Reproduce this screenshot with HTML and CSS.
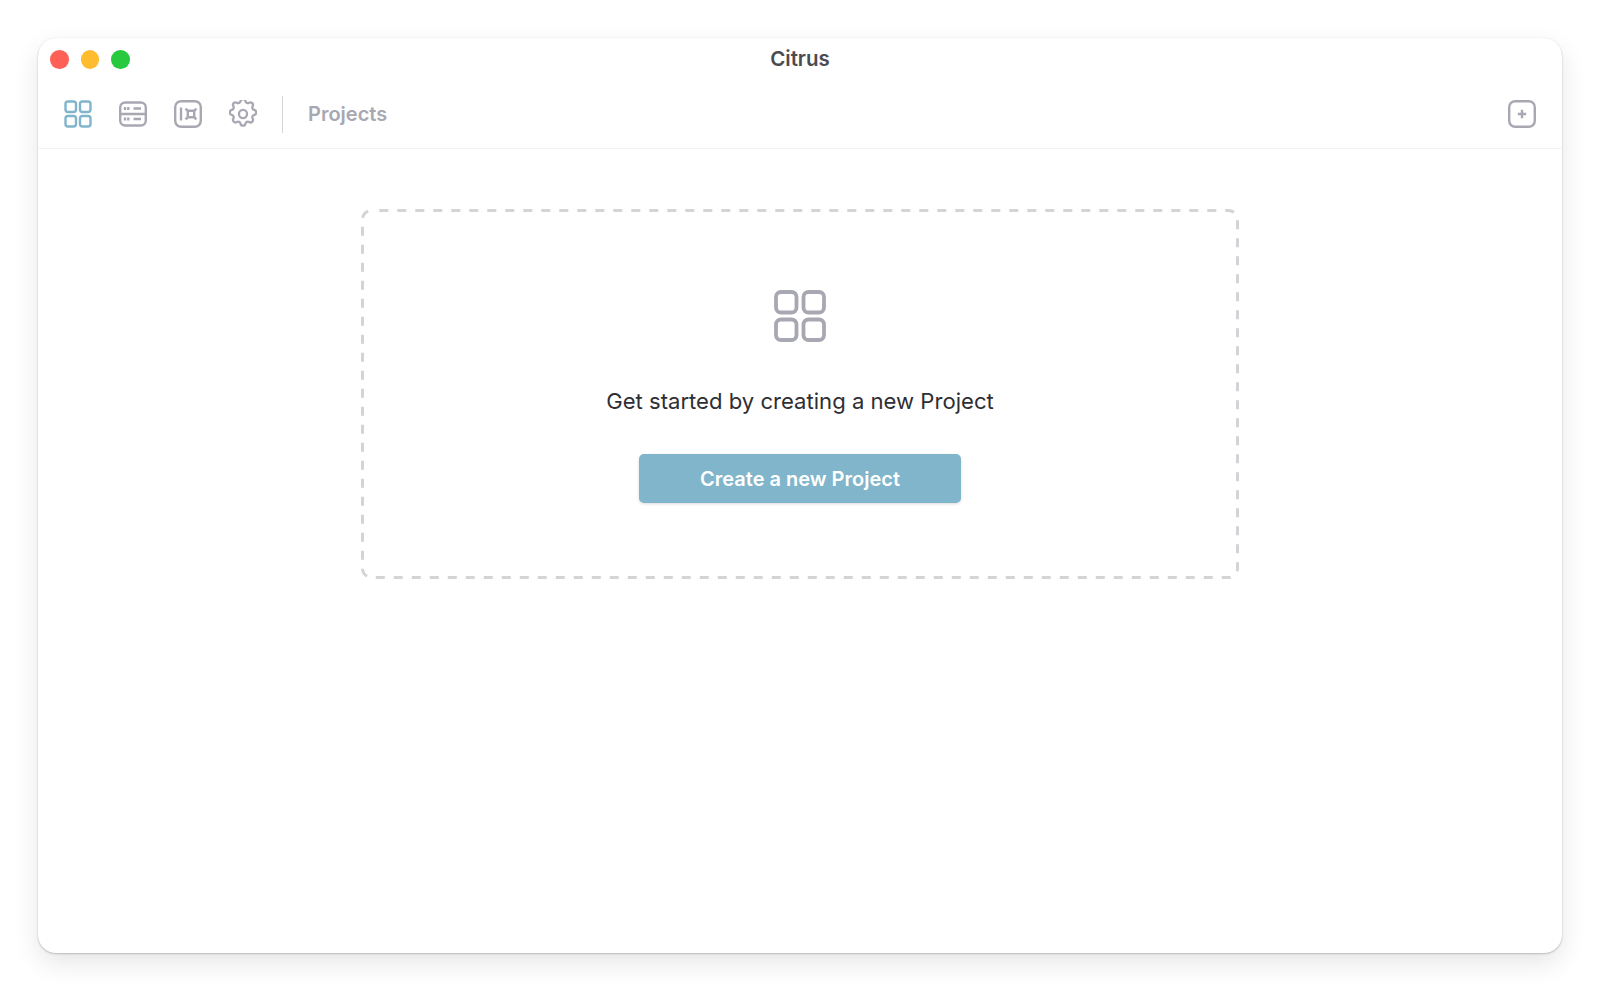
FILE: index.html
```html
<!DOCTYPE html>
<html>
<head>
  <title>Citrus</title>
  <link rel="stylesheet" href="styles.css">
</head>
<body>
  <div class="window">
    <div class="titlebar">
      <div class="lights">
        <span class="light red"></span>
        <span class="light yellow"></span>
        <span class="light green"></span>
      </div>
      <h1 class="title">Citrus</h1>
    </div>
    <div class="toolbar">
      <div class="nav">
        <a class="nav-icon active">
          <svg viewBox="0 0 28 28" width="28" height="28"><rect x="1.5" y="1.5" width="10.5" height="10.5" rx="2.5"/><rect x="16" y="1.5" width="10.5" height="10.5" rx="2.5"/><rect x="1.5" y="16" width="10.5" height="10.5" rx="2.5"/><rect x="16" y="16" width="10.5" height="10.5" rx="2.5"/></svg>
        </a>
        <a class="nav-icon">
          <svg viewBox="0 0 28 28" width="28" height="28"><rect x="1.2" y="2.5" width="25.6" height="23" rx="5"/><path d="M1.2 14h25.6M6 7v3M9.3 7v3M14.5 8.500h7.500M6 17.500v3M9.3 17.500v3M14.500 19h7.500"/></svg>
        </a>
        <a class="nav-icon">
          <svg viewBox="0 0 28 28" width="28" height="28"><rect x="1.2" y="1.2" width="25.6" height="25.6" rx="6"/><path d="M7 7.500v13"/><rect x="13.800" y="10.800" width="6.400" height="6.400" rx="1"/><path d="M11.600 8.600l2.200 2.200M22.400 8.600l-2.200 2.200M11.600 19.400l2.200-2.200M22.400 19.400l-2.200-2.200"/></svg>
        </a>
        <a class="nav-icon">
          <svg viewBox="2.300 1.800 19.400 19.400" width="28" height="28"><path class="thin" d="M10.300 2.600c.4-1.800 3-1.800 3.400 0a1.750 1.750 0 0 0 2.600 1.100c1.500-.9 3.300.8 2.400 2.400a1.750 1.750 0 0 0 1.100 2.600c1.800.4 1.800 3 0 3.400a1.750 1.750 0 0 0-1.100 2.600c.9 1.500-.8 3.300-2.400 2.400a1.750 1.750 0 0 0-2.600 1.100c-.4 1.800-3 1.800-3.400 0a1.750 1.750 0 0 0-2.600-1.100c-1.500.9-3.300-.8-2.400-2.400a1.750 1.750 0 0 0-1.100-2.600c-1.800-.4-1.800-3 0-3.400a1.750 1.750 0 0 0 1.100-2.600c-.9-1.500.8-3.300 2.400-2.400a1.750 1.750 0 0 0 2.600-1.100z"/><circle class="thin" cx="12" cy="11.500" r="2.800"/></svg>
        </a>
      </div>
      <span class="divider"></span>
      <span class="page-name">Projects</span>
      <a class="add-btn">
        <svg viewBox="0 0 28 28" width="28" height="28"><rect x="1.2" y="1.2" width="25.600" height="25.600" rx="6"/><path d="M14 9.800v8.400M9.800 14h8.400"/></svg>
      </a>
    </div>
    <div class="content">
      <div class="empty">
        <svg class="dashes" width="878" height="370"><rect x="1.500" y="1.500" width="875" height="367" rx="9"/></svg>
        <svg class="empty-icon" viewBox="0 0 52 52" width="52" height="52"><rect x="2" y="2" width="20.500" height="20.500" rx="5"/><rect x="29.500" y="2" width="20.500" height="20.500" rx="5"/><rect x="2" y="29.500" width="20.500" height="20.500" rx="5"/><rect x="29.500" y="29.500" width="20.500" height="20.500" rx="5"/></svg>
        <p class="empty-text">Get started by creating a new Project</p>
        <button class="create-btn" type="button">Create a new Project</button>
      </div>
    </div>
  </div>
</body>
</html>
```

FILE: styles.css
```css
* {
  box-sizing: border-box;
}

body {
  margin: 0;
  padding: 38px;
  height: 991px;
  overflow: hidden;
  background-color: #fff;
  font-family: Inter, "Liberation Sans", sans-serif;
}

.window {
  display: flex;
  flex-direction: column;
  height: 915px;
  background-color: #fff;
  border-radius: 18px;
  box-shadow: 0 0 1px rgba(0, 0, 0, 0.12), 0 1px 2px rgba(0, 0, 0, 0.2), 0 10px 26px rgba(0, 0, 0, 0.1);
}

.titlebar {
  position: relative;
  display: flex;
  justify-content: center;
  align-items: center;
  height: 41px;
}

.lights {
  position: absolute;
  left: 12px;
  top: 12px;
  display: flex;
  gap: 12px;
}

.light {
  width: 18.500px;
  height: 18.500px;
  border-radius: 50%;
}

.red { background-color: #fe5f57; }
.yellow { background-color: #febc2e; }
.green { background-color: #28c83f; }

.title {
  margin: 0;
  font-size: 20.500px;
  font-weight: 600;
  color: #4b4b52;
}

.toolbar {
  display: flex;
  align-items: center;
  height: 70px;
  padding: 1px 26px 0 26px;
  border-bottom: 1px solid #f3f3f5;
}

.nav {
  display: flex;
  gap: 27px;
}

.nav-icon,
.add-btn {
  display: flex;
}

.nav-icon svg *,
.add-btn svg * {
  fill: none;
  stroke: #a8a8b3;
  stroke-width: 2.400;
}

.nav-icon svg .thin {
  stroke-width: 1.600;
}

.nav-icon.active svg * {
  stroke: #80b5cb;
}

.divider {
  width: 1px;
  height: 37px;
  margin: 0 25px;
  background-color: #d6d6da;
}

.page-name {
  font-size: 20px;
  font-weight: 600;
  color: #a8a8b3;
}

.add-btn {
  margin-left: auto;
}

.content {
  flex: 1;
  display: flex;
  justify-content: center;
  padding-top: 60px;
}

.empty {
  position: relative;
  display: flex;
  flex-direction: column;
  align-items: center;
  width: 878px;
  height: 370px;
  padding-top: 81px;
}

.dashes {
  position: absolute;
  left: 0;
  top: 0;
}

.dashes rect {
  fill: none;
  stroke: #d4d4d8;
  stroke-width: 3;
  stroke-dasharray: 9 9;
  stroke-dashoffset: -7.800;
}

.empty-icon rect {
  fill: none;
  stroke: #a8a8b3;
  stroke-width: 3.800;
}

.empty-text {
  margin: 43.500px 0 0;
  font-size: 22.100px;
  line-height: 30px;
  color: #2e2e33;
}

.create-btn {
  width: 322px;
  height: 49px;
  margin-top: 38.500px;
  border: none;
  border-radius: 5px;
  background-color: #80b5cb;
  box-shadow: 0 1px 3px rgba(0, 0, 0, 0.15);
  color: #fff;
  font-family: inherit;
  font-size: 20px;
  font-weight: 600;
}
```
